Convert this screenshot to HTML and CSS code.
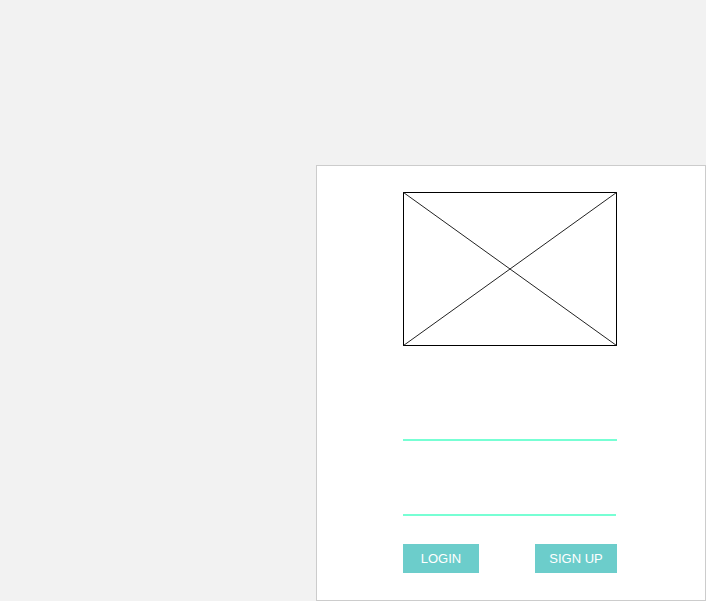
FILE: index.html
```html
<!DOCTYPE html>
<html lang="en">
<head>
<meta charset="utf-8">
<title>Login</title>
<link rel="stylesheet" href="styles.css">
</head>
<body>
<div class="page">
  <div class="card">
    <div class="form">
      <svg class="placeholder" width="214" height="154" viewBox="0 0 214 154" xmlns="http://www.w3.org/2000/svg">
        <rect x="0.5" y="0.5" width="213" height="153" fill="#fff" stroke="#000" stroke-width="1"/>
        <line x1="0.5" y1="0.5" x2="213.5" y2="153.5" stroke="#222" stroke-width="1"/>
        <line x1="213.5" y1="0.5" x2="0.5" y2="153.5" stroke="#222" stroke-width="1"/>
      </svg>
      <div class="field field-user"></div>
      <div class="field field-pass"></div>
      <div class="actions">
        <button class="btn btn-login">LOGIN</button>
        <button class="btn btn-signup">SIGN UP</button>
      </div>
    </div>
  </div>
</div>
</body>
</html>
```
FILE: styles.css
```css
html, body {
  margin: 0;
  padding: 0;
  background: #f2f2f2;
  height: 100%;
  overflow: hidden;
}
.page {
  padding: 165px 0 0 316px;
}
.card {
  width: 388px;
  height: 434px;
  background: #fff;
  border: 1px solid #cccccc;
}
.form {
  width: 214px;
  margin-left: 86px;
  padding-top: 26px;
  display: flex;
  flex-direction: column;
}
.placeholder {
  display: block;
}
.field {
  border-bottom: 2px solid #77ffd4;
  box-sizing: border-box;
}
.field-user {
  height: 95px;
}
.field-pass {
  height: 75px;
  width: 213px;
}
.actions {
  display: flex;
  justify-content: space-between;
  margin-top: 28px;
}
.btn {
  border: none;
  margin: 0;
  padding: 0;
  height: 29px;
  background: #6ccdcb;
  color: #fff;
  font-family: "Liberation Sans", Arial, sans-serif;
  font-size: 13px;
}
.btn-login {
  width: 76px;
}
.btn-signup {
  width: 82px;
}
```
